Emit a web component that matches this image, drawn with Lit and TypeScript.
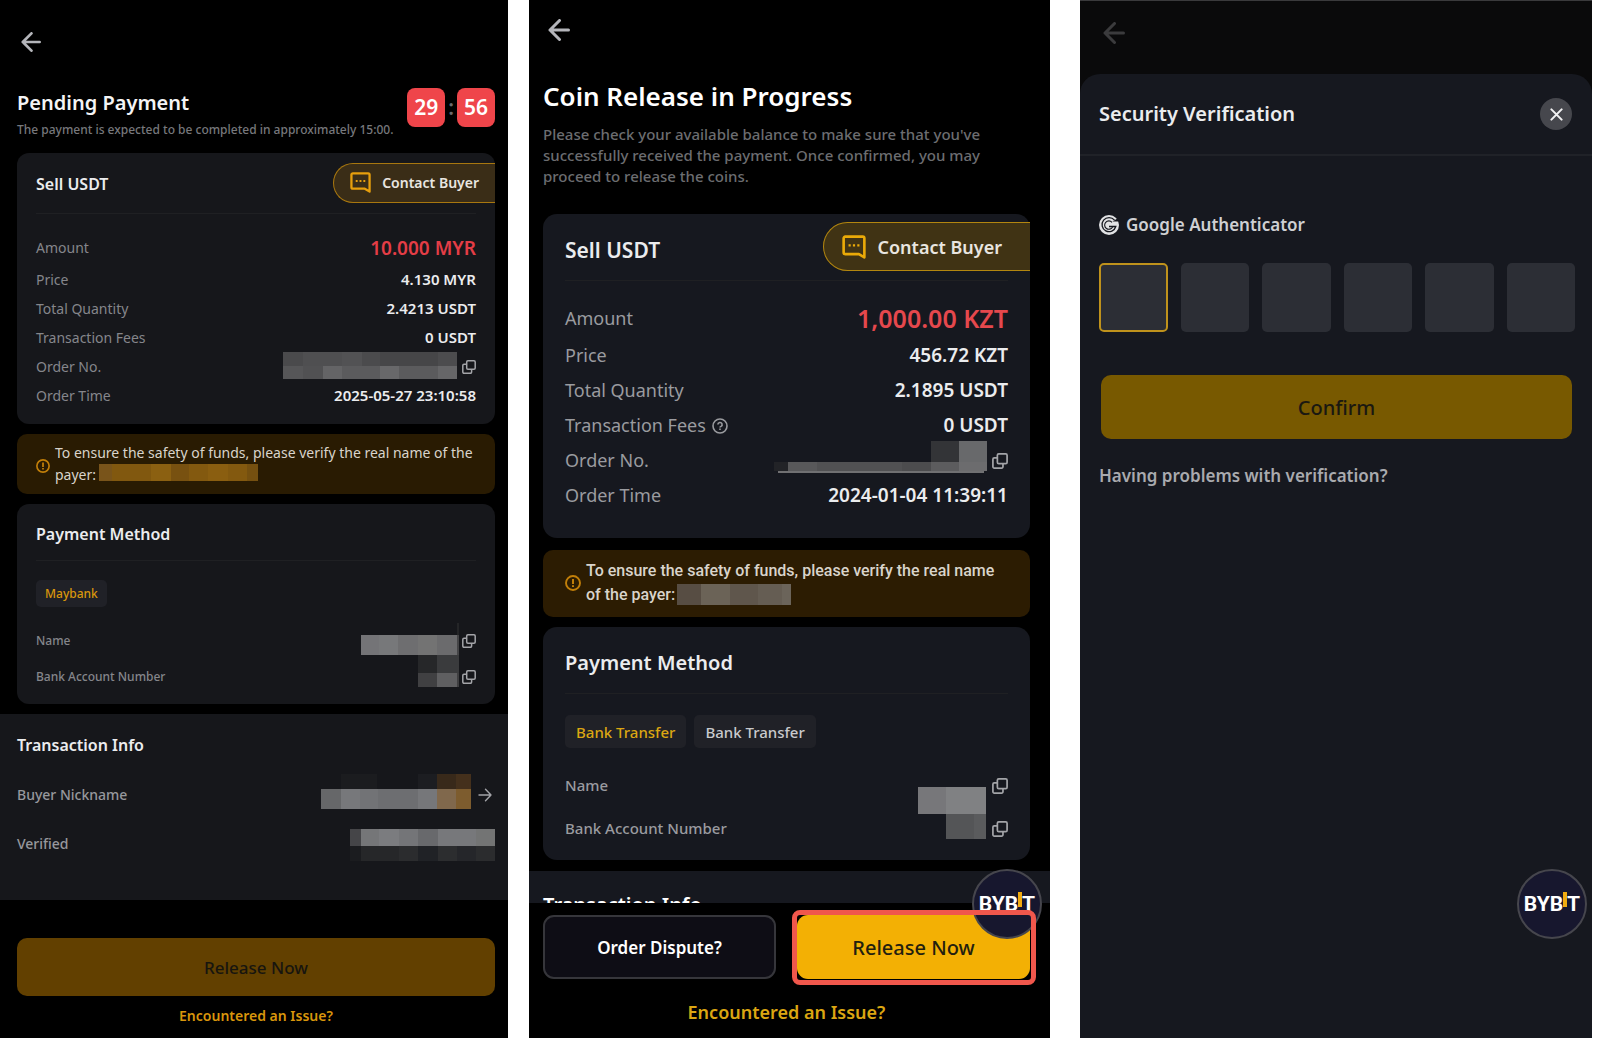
import { LitElement, html, svg, css, type TemplateResult } from "lit";
import { customElement } from "lit/decorators.js";

/** One block of a redaction mosaic: x, y, width, height, fill. */
type Block = [number, number, number, number, string];

interface Row {
  label: string;
  value?: string;
  strong?: boolean;
  help?: boolean;
  mosaic?: TemplateResult;
  copy?: boolean;
}

const mosaic = (w: number, h: number, blocks: Block[]) => html`
  <svg class="mosaic" width=${w} height=${h} viewBox="0 0 ${w} ${h}" shape-rendering="crispEdges" aria-hidden="true">
    ${blocks.map(([x, y, bw, bh, fill]) => svg`<rect x=${x} y=${y} width=${bw} height=${bh} fill=${fill}></rect>`)}
  </svg>
`;

const strip = (y: number, h: number, stops: [number, number, string][]): Block[] =>
  stops.map(([from, to, fill]) => [from, y, to - from, h, fill] as Block);

const backIcon = html`
  <svg class="back-icon" viewBox="0 0 22 22" fill="none" stroke="currentColor" stroke-width="3" stroke-linecap="round" stroke-linejoin="round" aria-hidden="true">
    <path d="M11.500 1.500 2 11l9.500 9.500M2 11h18.500"></path>
  </svg>
`;

const copyIcon = html`
  <svg class="copy-icon" viewBox="0 0 14 14" fill="none" stroke="currentColor" stroke-width="1.500" stroke-linejoin="round" aria-hidden="true">
    <rect x="4.700" y="0.800" width="8.500" height="8.500" rx="1.200"></rect>
    <path d="M4.700 4.200H2A1.200 1.200 0 0 0 .8 5.400V12A1.200 1.200 0 0 0 2 13.200h6.400A1.200 1.200 0 0 0 9.600 12V9.300"></path>
  </svg>
`;

const chatIcon = html`
  <svg class="chat-icon" viewBox="0 0 22 22" fill="none" aria-hidden="true">
    <path d="M20.500 20.500V3A1.500 1.500 0 0 0 19 1.500H3A1.500 1.500 0 0 0 1.500 3v13A1.500 1.500 0 0 0 3 17.500h12.500z" stroke="currentColor" stroke-width="2.400" stroke-linejoin="round"></path>
    <path d="M6 9.500h2M10 9.500h2M14 9.500h2" stroke="currentColor" stroke-width="2"></path>
  </svg>
`;

const alertIcon = html`
  <svg class="alert-icon" viewBox="0 0 16 16" fill="none" stroke="currentColor" stroke-width="1.900" aria-hidden="true">
    <circle cx="8" cy="8" r="7"></circle>
    <path d="M8 4v5M8 10.300v1.700" stroke-width="2"></path>
  </svg>
`;

const helpIcon = html`
  <svg class="help-icon" viewBox="0 0 16 16" fill="none" stroke="currentColor" stroke-width="1.600" aria-hidden="true">
    <circle cx="8" cy="8" r="7"></circle>
    <path d="M5.900 6.600a2.100 2.100 0 1 1 3.100 1.800c-.7.300-1 .6-1 1.200M8 10.600v1.500"></path>
  </svg>
`;

const nextIcon = html`
  <svg class="next-icon" viewBox="0 0 14 14" fill="none" stroke="currentColor" stroke-width="1.400" stroke-linecap="round" stroke-linejoin="round" aria-hidden="true">
    <path d="M1 7h12M7.500 1.200 13 7l-5.500 5.800"></path>
  </svg>
`;

const closeIcon = html`
  <svg class="close-icon" viewBox="0 0 14 14" fill="none" stroke="currentColor" stroke-width="2.200" stroke-linecap="round" aria-hidden="true">
    <path d="M1.500 1.500l11 11M12.500 1.500l-11 11"></path>
  </svg>
`;

const authIcon = html`
  <svg class="auth-icon" viewBox="0 0 20 22" aria-hidden="true">
    <circle cx="10" cy="11" r="10" fill="#e2e3e5"></circle>
    <path d="M20 3.500 13.500 7.500H20z" fill="#16181f"></path>
    <path d="M15.500 6.200A7 7 0 1 0 16.800 12.500H10" fill="none" stroke="#16181f" stroke-width="1.300"></path>
    <path d="M13 8.300A4.200 4.200 0 1 0 13.600 13" fill="none" stroke="#16181f" stroke-width="1.100"></path>
  </svg>
`;

const pendingRows: Row[] = [
  { label: "Amount", value: "10.000 MYR", strong: true },
  { label: "Price", value: "4.130 MYR" },
  { label: "Total Quantity", value: "2.4213 USDT" },
  { label: "Transaction Fees", value: "0 USDT" },
  {
    label: "Order No.",
    copy: true,
    mosaic: mosaic(174, 29, [
      ...strip(0, 14, [[0, 20, "#4a4a4c"], [20, 59, "#4f4f51"], [59, 79, "#525254"], [79, 97, "#4b4b4d"], [97, 155, "#464648"], [155, 174, "#4c4c4e"]]),
      ...strip(14, 13, [[0, 20, "#565658"], [20, 40, "#515153"], [40, 59, "#646466"], [59, 97, "#5b5b5d"], [97, 116, "#68686a"], [116, 155, "#5b5b5d"], [155, 174, "#666668"]]),
    ]),
  },
  { label: "Order Time", value: "2025-05-27 23:10:58" },
];

const pendingBank: Row[] = [
  {
    label: "Name",
    copy: true,
    mosaic: mosaic(98, 36, [
      [96, 0, 2, 12, "#242527"],
      ...strip(12, 20, [[0, 18, "#747477"], [18, 37, "#77787a"], [37, 57, "#6e6e70"], [57, 76, "#737373"], [76, 96, "#6b6b6d"], [96, 98, "#454547"]]),
      ...strip(32, 4, [[57, 76, "#262729"], [76, 98, "#3a3b3d"]]),
    ]),
  },
  {
    label: "Bank Account Number",
    copy: true,
    mosaic: mosaic(98, 36, [
      ...strip(0, 14, [[57, 76, "#262729"], [76, 98, "#3a3b3d"]]),
      ...strip(14, 14, [[57, 76, "#404042"], [76, 96, "#5f5f61"], [96, 98, "#3f3f41"]]),
    ]),
  },
];

const releaseRows: Row[] = [
  { label: "Amount", value: "1,000.00 KZT", strong: true },
  { label: "Price", value: "456.72 KZT" },
  { label: "Total Quantity", value: "2.1895 USDT" },
  { label: "Transaction Fees", value: "0 USDT", help: true },
  {
    label: "Order No.",
    copy: true,
    mosaic: mosaic(213, 39, [
      ...strip(0, 21, [[157, 185, "#333437"], [185, 213, "#68696b"]]),
      ...strip(21, 9, [[0, 14, "#222327"], [14, 43, "#58585a"], [43, 128, "#515153"], [128, 157, "#4c4c4e"], [157, 185, "#5c5c5e"], [185, 213, "#6c6c6e"]]),
      [4, 30, 206, 2, "#707072"],
    ]),
  },
  { label: "Order Time", value: "2024-01-04 11:39:11" },
];

const releaseBank: Row[] = [
  {
    label: "Name",
    copy: true,
    mosaic: mosaic(68, 43, strip(23, 20, [[0, 28, "#77777a"], [28, 68, "#808183"]])),
  },
  {
    label: "Bank Account Number",
    copy: true,
    mosaic: mosaic(68, 43, [
      ...strip(0, 7, [[0, 28, "#77777a"], [28, 68, "#808183"]]),
      ...strip(7, 25, [[28, 56, "#545557"], [56, 68, "#5a5b5d"]]),
    ]),
  },
];

const rowList = (rows: Row[], kind: string) => html`
  <dl class="rows ${kind}">
    ${rows.map(
      (r) => html`
        <div class="row ${r.strong ? "row-strong" : ""}">
          <dt>${r.label}${r.help ? helpIcon : ""}</dt>
          <dd>
            ${r.value ?? ""}${r.mosaic ?? ""}
            ${r.copy ? html`<button class="icon-btn copy" aria-label="Copy ${r.label}">${copyIcon}</button>` : ""}
          </dd>
        </div>
      `
    )}
  </dl>
`;

const contactButton = html`<button class="contact">${chatIcon}<span>Contact Buyer</span></button>`;

@customElement("bybit-badge")
export class BybitBadge extends LitElement {
  static styles = css`
    :host {
      display: flex;
      align-items: center;
      justify-content: center;
      box-sizing: border-box;
      width: 70px;
      height: 70px;
      border: 2px solid #46464d;
      border-radius: 50%;
      background: #17172e;
      color: #ffffff;
      font: 700 21px/24px Roboto, "Liberation Sans", sans-serif;
    }
    .bar {
      width: 4px;
      height: 15px;
      margin-bottom: 9px;
      background: #f0ab10;
    }
  `;

  render() {
    return html`<span>BYB</span><span class="bar"></span><span>T</span>`;
  }
}

@customElement("app-root")
export class AppRoot extends LitElement {
  static styles = css`
    :host {
      display: block;
      background: #ffffff;
      font-family: "Noto Sans", Roboto, sans-serif;
    }
    * {
      box-sizing: border-box;
    }
    h1, h2, p, dl, dd {
      margin: 0;
    }
    button, input {
      font: inherit;
      border: 0;
      padding: 0;
    }
    a {
      text-decoration: none;
    }
    svg {
      display: block;
      flex: none;
    }

    .page {
      display: flex;
      min-height: 100vh;
      padding-right: 8px;
    }
    .screen {
      position: relative;
      display: flex;
      flex-direction: column;
      min-width: 0;
      background: #000000;
      color: #ebecee;
    }
    .pending {
      flex: 508 1 0;
      --card: #16171b;
      --label: #85868b;
      --gold: #d9960c;
      --row: 29px;
      --text: 14px;
      --value: 15px;
      --copy: 14px;
    }
    .release {
      flex: 521 1 0;
      margin-left: 21px;
      --card: #16181f;
      --label: #9a9b9f;
      --gold: #dba612;
      --row: 35px;
      --text: 18px;
      --value: 19px;
      --copy: 16px;
    }
    .verify {
      flex: 512 1 0;
      margin-left: 30px;
      background: #0a0a0b;
      border-top: 1px solid #3a3a3c;
    }

    .icon-btn {
      display: flex;
      background: none;
      color: #a3a4a8;
    }
    .back {
      align-self: flex-start;
      margin: 32px 0 0 21px;
      color: #b4b5ba;
    }
    .back-icon {
      width: 20px;
      height: 20px;
    }
    .release .back {
      margin: 19px 0 0 19px;
    }
    .release .back-icon, .verify .back-icon {
      width: 22px;
      height: 22px;
    }
    .verify .back {
      margin: 21px 0 0 23px;
      color: #3b3b3d;
    }

    .pending .body {
      padding: 36px 13px 0 17px;
    }
    .intro {
      display: flex;
      justify-content: space-between;
      margin-bottom: 14px;
    }
    .title {
      font-size: 20px;
      line-height: 28px;
      font-weight: 600;
      color: #f4f4f5;
    }
    .pending .title {
      padding-top: 1px;
    }
    .pending .sub {
      margin-top: 4px;
      font-size: 12px;
      line-height: 18px;
      font-weight: 500;
      color: #77787c;
      white-space: nowrap;
    }
    .timer {
      display: flex;
      gap: 3px;
      font-size: 21px;
      line-height: 39px;
      font-weight: 600;
      color: #6a6b70;
    }
    .digits {
      width: 38px;
      height: 39px;
      border-radius: 8px;
      background: #ef454a;
      color: #ffffff;
      text-align: center;
    }

    .card {
      border-radius: 12px;
      background: var(--card);
    }
    .card + .notice, .notice + .card {
      margin-top: 10px;
    }
    .card-head {
      display: flex;
      align-items: center;
      justify-content: space-between;
      position: relative;
      height: 61px;
      padding-left: 19px;
    }
    .card-head::after {
      content: "";
      position: absolute;
      inset: auto 19px 0 19px;
      height: 1px;
      background: #1f2023;
    }
    .card-title {
      font-size: 16px;
      line-height: 22px;
      font-weight: 600;
    }
    .method .card-head {
      height: 57px;
    }
    .contact {
      display: flex;
      align-items: center;
      height: 40px;
      margin-bottom: 2px;
      padding: 0 16px 0 16px;
      gap: 11px;
      border: 1px solid #a8770f;
      border-right: 0;
      border-radius: 20px 0 0 20px;
      background: #3a2d17;
      color: #e9e6e0;
      font-size: 14px;
      font-weight: 600;
    }
    .chat-icon {
      width: 21px;
      height: 21px;
      color: #e79f0d;
    }

    .rows {
      padding: 17px 19px 14px;
      font-size: var(--text);
    }
    .row {
      display: flex;
      justify-content: space-between;
      height: var(--row);
      line-height: var(--row);
    }
    .row dt {
      display: flex;
      align-items: center;
      gap: 6px;
      color: var(--label);
    }
    .row dd {
      display: flex;
      align-items: center;
      font-size: var(--value);
      font-weight: 600;
    }
    .copy {
      margin-left: 5px;
    }
    .copy-icon {
      width: var(--copy);
      height: var(--copy);
    }
    .help-icon {
      width: 16px;
      height: 16px;
    }
    .order .row-strong {
      height: 34px;
      line-height: 34px;
    }
    .row-strong dd {
      font-size: 19px;
      color: #e43d46;
    }
    .rows.bank {
      --row: 36px;
      padding: 16px 19px 9px;
      font-size: 12px;
      font-weight: 500;
    }
    .bank .copy {
      margin-left: 3px;
    }

    .notice {
      display: flex;
      align-items: center;
      gap: 5px;
      padding: 8px 19px;
      border-radius: 10px;
      background: #291b02;
      color: #d9d4cb;
      font-size: 14px;
      line-height: 22px;
      white-space: nowrap;
    }
    .alert-icon {
      width: 14px;
      height: 14px;
      color: #c27f09;
    }
    .pending .alert-icon {
      margin-top: 3px;
    }
    .payer {
      display: flex;
      align-items: center;
      height: 22px;
      gap: 3px;
    }
    .chips {
      display: flex;
      gap: 8px;
      padding: 19px 19px 0;
    }
    .chip {
      height: 27px;
      padding: 0 9px;
      border-radius: 5px;
      background: #202127;
      color: #c9cacd;
      font-size: 12px;
      font-weight: 500;
    }
    .chip.on {
      color: var(--gold);
    }

    .info {
      margin-top: 10px;
      padding: 16px 13px 32px 17px;
      background: #16171b;
    }
    .info-title {
      font-size: 16px;
      line-height: 30px;
      font-weight: 600;
    }
    .info-rows {
      margin-top: 10px;
      --row: 49px;
      --label: #97989d;
      font-size: 14px;
      font-weight: 500;
    }
    .next-icon {
      width: 14px;
      height: 14px;
      margin: 0 3px 0 7px;
    }

    .primary {
      width: 100%;
      height: 58px;
      border-radius: 10px;
      background: #624000;
      color: #17150f;
      font-size: 17px;
      font-weight: 500;
    }
    .issue {
      align-self: center;
      color: var(--gold);
      font-size: 14px;
      line-height: 24px;
      font-weight: 600;
    }
    .footer {
      display: flex;
      flex-direction: column;
    }
    .pending .footer {
      gap: 8px;
      padding: 38px 13px 10px 17px;
    }

    .release .body {
      padding: 37px 20px 0 14px;
    }
    .release .intro {
      display: block;
      margin-bottom: 27px;
    }
    .release .title {
      font-size: 26px;
      line-height: 36px;
      color: #ffffff;
    }
    .release .sub {
      margin-top: 10px;
      font-size: 15px;
      line-height: 21px;
      font-weight: 500;
      color: #6c6d70;
    }
    .release .card {
      border-radius: 14px;
    }
    .release .card-head {
      height: 67px;
      padding-left: 22px;
    }
    .release .card-head::after {
      inset: auto 22px 0 22px;
    }
    .card-title.low {
      padding-top: 3px;
    }
    .release .card-title {
      padding-top: 4px;
      font-size: 20px;
      line-height: 28px;
    }
    .release .order .card-title {
      font-size: 21px;
    }
    .release .contact {
      height: 49px;
      padding: 0 28px 0 18px;
      gap: 12px;
      border-radius: 25px 0 0 25px;
      font-size: 18px;
      background: #403314;
      border-color: #b3860f;
    }
    .release .chat-icon {
      width: 24px;
      height: 24px;
      color: #eaaa08;
    }
    .release .rows {
      padding: 17px 22px 25px;
    }
    .release .order .row-strong {
      height: 40px;
      line-height: 40px;
    }
    .release .row-strong dd {
      font-size: 25px;
      color: #e5484d;
    }
    .release .rows.bank {
      --row: 43px;
      padding: 16px 22px 10px;
      font-size: 15px;
    }
    .release .bank .copy {
      margin-left: 6px;
    }
    .release .notice {
      margin-top: 12px;
      padding: 9px 22px 10px;
      gap: 5px;
      font-family: Roboto, sans-serif;
      font-size: 16px;
      line-height: 24px;
      font-weight: 500;
      background: #2c1c02;
    }
    .release .payer {
      height: 24px;
      gap: 2px;
    }
    .release .alert-icon {
      width: 16px;
      height: 16px;
    }
    .release .chips {
      padding: 21px 22px 0;
    }
    .release .chip {
      height: 33px;
      padding: 0 11px;
      font-size: 15px;
    }
    .release .info {
      height: 32px;
      margin-top: 11px;
      padding: 20px 14px 0;
      overflow: hidden;
      background: #16181f;
    }
    .release .info-title {
      font-size: 20px;
      line-height: 28px;
      color: #ffffff;
    }
    .release .footer {
      gap: 19px;
      padding: 12px 20px 12px 14px;
    }
    .actions {
      display: grid;
      grid-template-columns: 1fr 1fr;
      gap: 21px;
    }
    .dispute, .release .primary {
      height: 64px;
      border-radius: 11px;
      font-size: 17px;
    }
    .dispute {
      border: 2px solid #36363b;
      background: #0e0d15;
      color: #ffffff;
      font-weight: 600;
    }
    .release .primary {
      display: block;
      background: #f3b004;
      color: #23200f;
      font-size: 20px;
    }
    .highlight {
      position: relative;
    }
    .highlight::after {
      content: "";
      position: absolute;
      z-index: 2;
      inset: -5px -6px -6px -5px;
      border: 5px solid #f0574c;
      border-radius: 8px;
      pointer-events: none;
    }
    .floating {
      position: absolute;
      z-index: 1;
      right: 8px;
      bottom: 99px;
    }
    .verify .floating {
      right: 5px;
    }
    .release .issue {
      font-size: 18px;
      line-height: 28px;
    }

    .sheet {
      flex: 1;
      margin-top: 30px;
      border-radius: 20px 20px 0 0;
      background: #16181f;
    }
    .sheet-head {
      display: flex;
      align-items: center;
      justify-content: space-between;
      height: 82px;
      padding: 0 20px 0 19px;
      border-bottom: 2px solid #202228;
    }
    .sheet-title {
      font-size: 20px;
      line-height: 28px;
      font-weight: 600;
    }
    .close {
      align-items: center;
      justify-content: center;
      width: 32px;
      height: 32px;
      border-radius: 50%;
      background: #46474d;
      color: #f1f1f2;
    }
    .close-icon {
      width: 13px;
      height: 13px;
    }
    .form {
      padding: 56px 17px 0 19px;
    }
    .auth {
      display: flex;
      align-items: center;
      gap: 7px;
      color: #cfd0d3;
      font-size: 17px;
      line-height: 26px;
      font-weight: 600;
    }
    .auth-icon {
      width: 20px;
      height: 22px;
    }
    .code {
      display: grid;
      grid-template-columns: repeat(6, 1fr);
      gap: 13px;
      margin-top: 25px;
    }
    .code input {
      width: 100%;
      height: 69px;
      border-radius: 5px;
      background: #2c2e35;
      color: #ffffff;
      font-size: 24px;
      text-align: center;
      outline: none;
    }
    .code .active {
      border: 2px solid #bf921c;
    }
    .confirm {
      display: block;
      width: calc(100% - 5px);
      height: 64px;
      margin: 43px 3px 0 2px;
      border-radius: 10px;
      background: #785900;
      color: #1a1811;
      font-size: 20px;
      font-weight: 500;
    }
    .trouble {
      display: inline-block;
      margin-top: 24px;
      color: #a9aaae;
      font-size: 17px;
      line-height: 26px;
      font-weight: 600;
    }
  `;

  private pending() {
    return html`
      <section class="screen pending">
        <button class="icon-btn back" aria-label="Back">${backIcon}</button>
        <div class="body">
          <header class="intro">
            <div>
              <h1 class="title">Pending Payment</h1>
              <p class="sub">The payment is expected to be completed in approximately 15:00.</p>
            </div>
            <div class="timer"><span class="digits">29</span>:<span class="digits">56</span></div>
          </header>
          <div class="card order">
            <div class="card-head"><h2 class="card-title">Sell USDT</h2>${contactButton}</div>
            ${rowList(pendingRows, "")}
          </div>
          <div class="notice">
            ${alertIcon}
            <div>
              <p>To ensure the safety of funds, please verify the real name of the</p>
              <p class="payer">payer: ${mosaic(159, 22, strip(0, 17, [[0, 13, "#79541a"], [13, 52, "#81580f"], [52, 72, "#8b6011"], [72, 90, "#785110"], [90, 109, "#83590f"], [109, 129, "#8a5e10"], [129, 148, "#83590f"], [148, 159, "#755010"]]))}</p>
            </div>
          </div>
          <div class="card method">
            <div class="card-head"><h2 class="card-title low">Payment Method</h2></div>
            <div class="chips"><button class="chip on">Maybank</button></div>
            ${rowList(pendingBank, "bank")}
          </div>
        </div>
        <div class="info">
          <h2 class="info-title">Transaction Info</h2>
          <dl class="info-rows">
            <div class="row">
              <dt>Buyer Nickname</dt>
              <dd>
                ${mosaic(150, 49, [
                  ...strip(4, 15, [[20, 56, "#1b1c1f"], [97, 116, "#1c1d21"], [116, 135, "#38291a"], [135, 150, "#44301c"]]),
                  ...strip(19, 20, [[0, 20, "#666769"], [20, 39, "#77787b"], [39, 57, "#727376"], [57, 97, "#6d6e71"], [97, 116, "#76777a"], [116, 135, "#80684c"], [135, 150, "#7d5c2e"]]),
                ])}
                <button class="icon-btn" aria-label="Open buyer profile">${nextIcon}</button>
              </dd>
            </div>
            <div class="row">
              <dt>Verified</dt>
              <dd>
                ${mosaic(145, 49, [
                  ...strip(10, 17, [[0, 11, "#454548"], [11, 29, "#757678"], [29, 49, "#7b7c7f"], [49, 68, "#747578"], [68, 88, "#68696c"], [88, 126, "#77787b"], [126, 145, "#737474"]]),
                  ...strip(27, 15, [[0, 11, "#1b1c1f"], [11, 49, "#262729"], [49, 68, "#2b2c2e"], [68, 88, "#202226"], [88, 107, "#2c2d2f"], [107, 126, "#25262a"], [126, 145, "#2b2c2e"]]),
                ])}
              </dd>
            </div>
          </dl>
        </div>
        <div class="footer">
          <button class="primary">Release Now</button>
          <a class="issue" href="#help">Encountered an Issue?</a>
        </div>
      </section>
    `;
  }

  private release() {
    return html`
      <section class="screen release">
        <button class="icon-btn back" aria-label="Back">${backIcon}</button>
        <div class="body">
          <header class="intro">
            <h1 class="title">Coin Release in Progress</h1>
            <p class="sub">
              Please check your available balance to make sure that you've<br />successfully received the payment. Once confirmed, you may<br />proceed to release the coins.
            </p>
          </header>
          <div class="card order">
            <div class="card-head"><h2 class="card-title">Sell USDT</h2>${contactButton}</div>
            ${rowList(releaseRows, "")}
          </div>
          <div class="notice">
            ${alertIcon}
            <div>
              <p>To ensure the safety of funds, please verify the real name</p>
              <p class="payer">of the payer: ${mosaic(114, 22, strip(0, 21, [[0, 24, "#574d43"], [24, 53, "#6b6357"], [53, 81, "#5f564c"], [81, 105, "#655d53"], [105, 114, "#6b645a"]]))}</p>
            </div>
          </div>
          <div class="card method">
            <div class="card-head"><h2 class="card-title">Payment Method</h2></div>
            <div class="chips">
              <button class="chip on">Bank Transfer</button>
              <button class="chip">Bank Transfer</button>
            </div>
            ${rowList(releaseBank, "bank")}
          </div>
        </div>
        <div class="info"><h2 class="info-title">Transaction Info</h2></div>
        <div class="footer">
          <div class="actions">
            <button class="dispute">Order Dispute?</button>
            <div class="highlight"><button class="primary">Release Now</button></div>
          </div>
          <a class="issue" href="#help">Encountered an Issue?</a>
        </div>
        <bybit-badge class="floating"></bybit-badge>
      </section>
    `;
  }

  private verify() {
    return html`
      <section class="screen verify">
        <button class="icon-btn back" aria-label="Back">${backIcon}</button>
        <div class="sheet">
          <header class="sheet-head">
            <h1 class="sheet-title">Security Verification</h1>
            <button class="icon-btn close" aria-label="Close">${closeIcon}</button>
          </header>
          <form class="form">
            <label class="auth" for="digit-1">${authIcon}Google Authenticator</label>
            <div class="code">
              ${[1, 2, 3, 4, 5, 6].map(
                (n) => html`<input id="digit-${n}" class=${n === 1 ? "active" : ""} inputmode="numeric" maxlength="1" aria-label="Digit ${n}" />`
              )}
            </div>
            <button class="confirm" type="button">Confirm</button>
            <a class="trouble" href="#trouble">Having problems with verification?</a>
          </form>
        </div>
        <bybit-badge class="floating"></bybit-badge>
      </section>
    `;
  }

  render() {
    return html`<main class="page">${this.pending()}${this.release()}${this.verify()}</main>`;
  }
}
